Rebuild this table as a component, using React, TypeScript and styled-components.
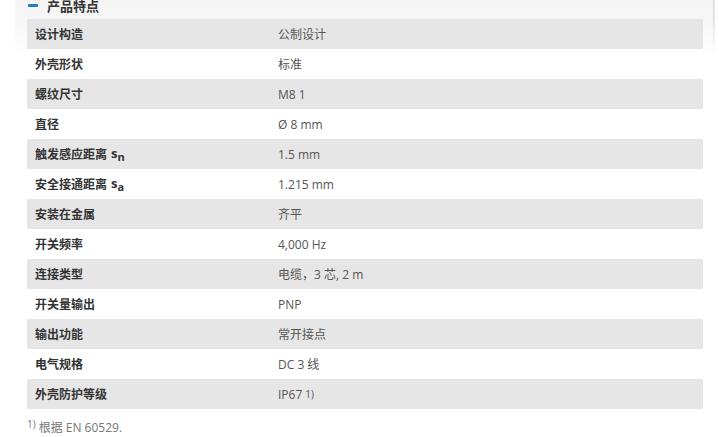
import React from "react";
import styled, { createGlobalStyle } from "styled-components";

const Global = createGlobalStyle`
  html, body { margin: 0; padding: 0; background: #fff; }
  body { font-family: "Open Sans", "Noto Sans CJK SC", sans-serif; }
`;

const Page = styled.div`
  width: 719px;
  height: 437px;
  overflow: hidden;
  position: relative;
`;

const Panel = styled.section`
  margin: -8px 0 0 15px;
  width: 698px;
  padding: 0 10px 0 12px;
  box-sizing: border-box;
  background: linear-gradient(#f3f3f3 0px, #f7f7f7 30px, #ffffff 65px);
  position: relative;
  &::after {
    content: "";
    position: absolute;
    right: -3px;
    top: 0;
    width: 3px;
    height: 65px;
    background: linear-gradient(to right, #d6d6d6, #ececec 60%, transparent);
    -webkit-mask-image: linear-gradient(#000, #000 40%, transparent);
    mask-image: linear-gradient(#000, #000 40%, transparent);
  }
`;

const Heading = styled.h2`
  margin: 0;
  height: 27px;
  display: flex;
  align-items: center;
  gap: 9px;
  font-size: 13px;
  font-weight: 600;
  color: #333;
  padding-left: 1px;
`;

const Dash = styled.span`
  width: 10px;
  height: 3px;
  background: #1f7fc4;
  border-radius: 1px;
`;

const Table = styled.div`
  display: grid;
  grid-template-columns: 243px 1fr;
`;

const Row = styled.div<{ $shade: boolean }>`
  display: contents;
  & > div {
    background: ${(p) => (p.$shade ? "#e6e6e6" : "#ffffff")};
  }
`;

const Label = styled.div`
  height: 30px;
  display: flex;
  align-items: center;
  padding: 0 8px;
  font-size: 12px;
  font-weight: 600;
  color: #333;
`;

const Value = styled.div`
  height: 30px;
  display: flex;
  align-items: center;
  padding: 0 8px;
  font-size: 12px;
  color: #555;
`;

const S = styled.span`
  font-weight: 700;
  font-size: 13px;
  margin-left: 4px;
  sub {
    font-size: 11px;
    vertical-align: -3px;
  }
`;

const Sup = styled.sup`
  font-size: 10px;
  vertical-align: 4px;
  margin-left: 3px;
`;

const Note = styled.p`
  margin: 8px 0 0 27px;
  font-size: 12px;
  color: #777;
  sup {
    font-size: 10px;
    vertical-align: 4px;
    margin-right: 3px;
  }
`;

type Item = { label: React.ReactNode; value: React.ReactNode };

const items: Item[] = [
  { label: "设计构造", value: "公制设计" },
  { label: "外壳形状", value: "标准" },
  { label: "螺纹尺寸", value: "M8 1" },
  { label: "直径", value: "Ø 8 mm" },
  { label: <>触发感应距离<S>s<sub>n</sub></S></>, value: "1.5 mm" },
  { label: <>安全接通距离<S>s<sub>a</sub></S></>, value: "1.215 mm" },
  { label: "安装在金属", value: "齐平" },
  { label: "开关频率", value: "4,000 Hz" },
  { label: "连接类型", value: "电缆，3 芯, 2 m" },
  { label: "开关量输出", value: "PNP" },
  { label: "输出功能", value: "常开接点" },
  { label: "电气规格", value: "DC 3 线" },
  { label: "外壳防护等级", value: <>IP67<Sup>1)</Sup></> },
];

export default function App() {
  return (
    <Page>
      <Global />
      <Panel>
        <Heading>
          <Dash />
          产品特点
        </Heading>
        <Table>
          {items.map((it, i) => (
            <Row key={i} $shade={i % 2 === 0}>
              <Label>{it.label}</Label>
              <Value>{it.value}</Value>
            </Row>
          ))}
        </Table>
      </Panel>
      <Note>
        <sup>1)</sup>根据 EN 60529.
      </Note>
    </Page>
  );
}
